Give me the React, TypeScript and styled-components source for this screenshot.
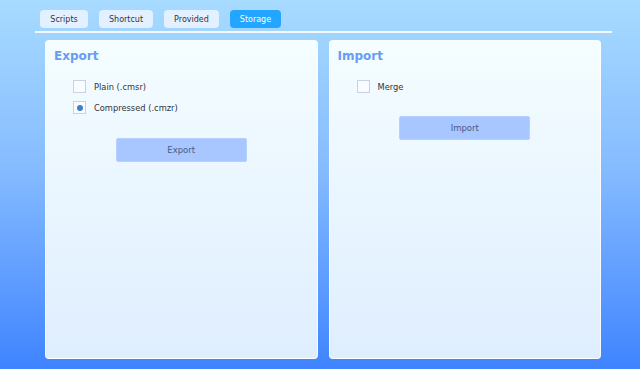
import React from "react";
import styled, { createGlobalStyle } from "styled-components";

const GlobalStyle = createGlobalStyle`
  html, body {
    margin: 0;
    padding: 0;
    height: 100%;
  }
  #root {
    height: 100%;
  }
  body {
    font-family: "DejaVu Sans", Verdana, sans-serif;
  }
`;

const Page = styled.div`
  box-sizing: border-box;
  height: 369px;
  display: flex;
  flex-direction: column;
  background: linear-gradient(to bottom, #a7dbff 0%, #86bcff 45%, #3f84ff 100%);
`;

const TabsHeader = styled.nav`
  display: flex;
  gap: 11px;
  padding: 10px 0 0 40px;
  height: 18px;
`;

const Tab = styled.button<{ $active?: boolean }>`
  box-sizing: border-box;
  height: 18px;
  min-width: 48px;
  padding: 0 10px;
  border: none;
  border-radius: 4px;
  font-family: "DejaVu Sans", Verdana, sans-serif;
  font-size: 8px;
  background: ${(p) => (p.$active ? "#22a6ff" : "#e3f0ff")};
  color: ${(p) => (p.$active ? "#ffffff" : "#333344")};
  cursor: pointer;
`;

const Rule = styled.div`
  height: 2px;
  margin: 3px 28px 0 35px;
  background: rgba(255, 255, 255, 0.85);
`;

const Panels = styled.main`
  flex: 1;
  display: flex;
  gap: 11px;
  padding: 7px 39px 10px 45px;
`;

const Panel = styled.section`
  flex: 1;
  box-sizing: border-box;
  border-radius: 4px;
  border: 1px solid rgba(255, 255, 255, 0.8);
  background: linear-gradient(to bottom, #f4fdff 0%, #dfeeff 100%);
  padding: 8px 8px;
`;

const Title = styled.h2`
  margin: 0;
  font-family: "DejaVu Sans", Verdana, sans-serif;
  font-size: 12px;
  font-weight: bold;
  color: #6a9bf3;
`;

const Options = styled.div`
  display: flex;
  flex-direction: column;
  gap: 8px;
  margin: 17px 0 0 19px;
`;

const Option = styled.label`
  display: flex;
  align-items: center;
  gap: 8px;
  font-size: 8.3px;
  color: #333;
`;

const Box = styled.span<{ $checked?: boolean }>`
  box-sizing: border-box;
  width: 13px;
  height: 13px;
  border: 1px solid #c9d1e2;
  background: #f8fbff;
  display: flex;
  align-items: center;
  justify-content: center;
  &::after {
    content: "";
    display: ${(p) => (p.$checked ? "block" : "none")};
    width: 6px;
    height: 6px;
    border-radius: 50%;
    background: #3f7fc4;
  }
`;

const ButtonRow = styled.div<{ $top: number }>`
  display: flex;
  justify-content: center;
  margin-top: ${(p) => p.$top}px;
`;

const ActionButton = styled.button`
  width: 131px;
  height: 24px;
  border: 1px solid #b8d0ff;
  border-radius: 2px;
  background: #a8c6ff;
  color: #4b5b85;
  font-family: "DejaVu Sans", Verdana, sans-serif;
  font-size: 8.5px;
`;

const App = () => (
  <>
    <GlobalStyle />
    <Page>
      <TabsHeader>
        <Tab>Scripts</Tab>
        <Tab>Shortcut</Tab>
        <Tab>Provided</Tab>
        <Tab $active>Storage</Tab>
      </TabsHeader>
      <Rule />
      <Panels>
        <Panel>
          <Title>Export</Title>
          <Options>
            <Option>
              <Box />
              Plain (.cmsr)
            </Option>
            <Option>
              <Box $checked />
              Compressed (.cmzr)
            </Option>
          </Options>
          <ButtonRow $top={24}>
            <ActionButton>Export</ActionButton>
          </ButtonRow>
        </Panel>
        <Panel>
          <Title>Import</Title>
          <Options>
            <Option>
              <Box />
              Merge
            </Option>
          </Options>
          <ButtonRow $top={23}>
            <ActionButton>Import</ActionButton>
          </ButtonRow>
        </Panel>
      </Panels>
    </Page>
  </>
);

export default App;
